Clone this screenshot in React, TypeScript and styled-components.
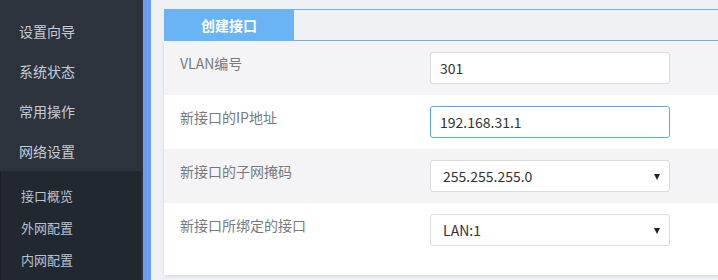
import React from "react";
import styled, { createGlobalStyle } from "styled-components";

const Global = createGlobalStyle`
  html, body { margin: 0; padding: 0; overflow: hidden; background: #f0f1f5; }
  body { font-family: "Noto Sans CJK SC", "Noto Sans", sans-serif; }
  * { box-sizing: border-box; }
`;

const Page = styled.div`
  display: flex;
  width: 718px;
  height: 280px;
  overflow: hidden;
`;

const Sidebar = styled.nav`
  width: 143px;
  flex: none;
  background: #2c333d;
  padding-top: 11px;
  display: flex;
  flex-direction: column;
`;

const MenuItem = styled.div`
  height: 40px;
  line-height: 40px;
  padding-left: 19px;
  color: #c6ccd5;
  font-size: 14px;
`;

const SubMenu = styled.div`
  flex: 1;
  margin-right: 2px;
  background: #212830;
  border-left: 1px solid #1b2027;
  padding-top: 9px;
`;

const SubItem = styled.div`
  height: 32px;
  line-height: 32px;
  padding-left: 20px;
  color: #b9c3d0;
  font-size: 13px;
`;

const Stripe = styled.div`
  width: 8px;
  flex: none;
  background: #6b9ff7;
`;

const Main = styled.main`
  flex: 1;
  min-width: 0;
  padding: 9px 0 0 13px;
  overflow: hidden;
`;

const TabBar = styled.div`
  display: flex;
  width: 620px;
  height: 32px;
  border-top: 1px solid #69b4f4;
  border-bottom: 1px solid #69b4f4;
`;

const Tab = styled.div`
  width: 130px;
  margin: -1px 0;
  height: 32px;
  background: #69b4f4;
  color: #fff;
  font-weight: bold;
  font-size: 14px;
  display: flex;
  align-items: center;
  justify-content: center;
`;

const Card = styled.section`
  width: 620px;
  background: #fff;
  padding-bottom: 18px;
  box-shadow: 0 1px 3px rgba(110, 140, 210, 0.28);
`;

const Row = styled.div<{ $alt?: boolean }>`
  display: flex;
  height: 54px;
  padding: 11px 0 11px 16px;
  background: ${(p) => (p.$alt ? "#f4f4f6" : "#fff")};
`;

const Label = styled.div`
  width: 250px;
  flex: none;
  padding-top: 1px;
  line-height: 20px;
  font-size: 14px;
  color: #767a80;
`;

const Field = styled.div<{ $focus?: boolean }>`
  position: relative;
  width: 240px;
  height: 32px;
  border: 1px solid ${(p) => (p.$focus ? "#58a9f5" : "#dcdcdf")};
  border-radius: 3px;
  background: #fff;
  display: flex;
  align-items: center;
  padding-left: 9px;
  font-size: 14px;
  color: #333;
`;

const SelectField = styled(Field)`
  padding-left: 12px;
`;

const Arrow = styled.span`
  position: absolute;
  right: 9px;
  top: 13px;
  width: 0;
  height: 0;
  border-left: 3.5px solid transparent;
  border-right: 3.5px solid transparent;
  border-top: 6px solid #222;
`;

const rows = [
  { label: "VLAN编号", value: "301", type: "input" },
  { label: "新接口的IP地址", value: "192.168.31.1", type: "input", focus: true },
  { label: "新接口的子网掩码", value: "255.255.255.0", type: "select" },
  { label: "新接口所绑定的接口", value: "LAN:1", type: "select" },
];

export default function App() {
  return (
    <Page>
      <Global />
      <Sidebar>
        {["设置向导", "系统状态", "常用操作", "网络设置"].map((t) => (
          <MenuItem key={t}>{t}</MenuItem>
        ))}
        <SubMenu>
          {["接口概览", "外网配置", "内网配置"].map((t) => (
            <SubItem key={t}>{t}</SubItem>
          ))}
        </SubMenu>
      </Sidebar>
      <Stripe />
      <Main>
        <TabBar>
          <Tab>创建接口</Tab>
        </TabBar>
        <Card>
          {rows.map((r, i) => (
            <Row key={r.label} $alt={i % 2 === 0}>
              <Label>{r.label}</Label>
              {r.type === "input" ? (
                <Field $focus={r.focus}>{r.value}</Field>
              ) : (
                <SelectField>
                  {r.value}
                  <Arrow />
                </SelectField>
              )}
            </Row>
          ))}
        </Card>
      </Main>
    </Page>
  );
}
